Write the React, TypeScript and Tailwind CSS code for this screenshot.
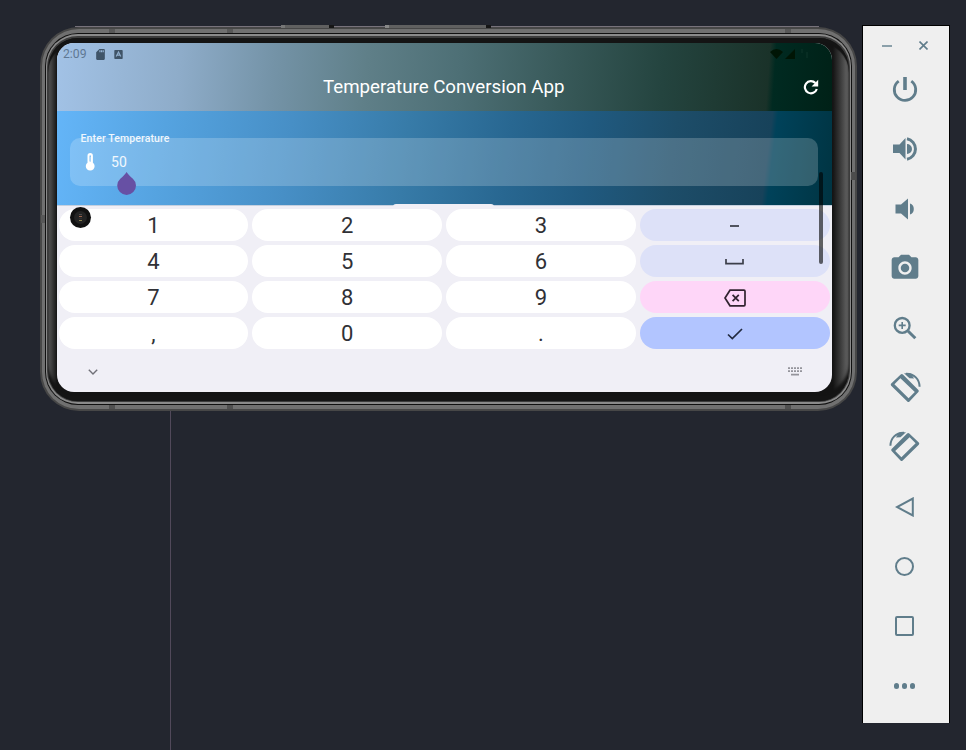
import React from "react";
import { MdPhotoCamera, MdSdCard } from "react-icons/md";

const NUMBER_KEYS = "bg-white text-[#303136]";

function Key({ tone, children }: { tone: string; children: React.ReactNode }) {
  return (
    <div className={`flex items-center justify-center rounded-full pt-[2px] text-[22px] leading-none ${tone}`}>
      {children}
    </div>
  );
}

function DropHandle() {
  return (
    <svg className="absolute left-[60px] top-[128.5px] h-[23px] w-[19px]" viewBox="0 0 19 23">
      <path d="M9.6 0C11 2.6 13.6 4.6 15.9 6.7A9.35 9.35 0 1 1 3.3 6.7C5.6 4.6 8.2 2.6 9.6 0Z" fill="#6750a4" />
    </svg>
  );
}

function CameraHole() {
  return (
    <div className="absolute left-[12.5px] top-[163.7px] flex h-[21px] w-[21px] items-center justify-center rounded-full bg-[#111]">
      <div className="flex h-[13px] w-[13px] flex-col items-center justify-center gap-[1px] rounded-full bg-[#232323]">
        <div className="h-px w-[3px] bg-[#4a4a4a]" />
        <div className="h-px w-[3px] bg-[#98604a]" />
        <div className="h-px w-[3px] bg-[#303030]" />
        <div className="h-px w-[3px] bg-[#8c8450]" />
      </div>
    </div>
  );
}

function StatusBar() {
  return (
    <div className="flex h-[22px] items-center pl-[6px] text-[12.2px] text-[#5f7893]">
      <span className="w-[31px]">2:09</span>
      <MdSdCard className="size-[13px] text-[#3f5468]" />
      <svg className="ml-[7px] size-[9px]" viewBox="0 0 9 9">
        <rect x="0.3" y="0" width="8.4" height="9" rx="0.8" fill="#3f5468" />
        <path d="M2.2 6.5 4.5 2 6.8 6.5M3 5.2h3" fill="none" stroke="#8fadcc" strokeWidth="1.2" />
      </svg>
      <svg className="ml-auto mr-[21px] h-[12px] w-[41px]" viewBox="0 0 41 12">
        <path d="M0 4Q6.500 -2 13 4L6.500 11Z" fill="#001505" />
        <path d="M25 1V11H15Z" fill="#001505" />
        <path d="M32 1v4M37 4v6" stroke="#0a3026" strokeWidth="1.5" />
      </svg>
    </div>
  );
}

function Screen() {
  return (
    <div className="relative flex h-[349px] w-[775px] flex-col overflow-hidden rounded-[17px] bg-[#f0eff6]">
      <div className="h-[68px] bg-[linear-gradient(94deg,#a2c2e6_0%,#8eacc9_16%,#7493a7_28%,#5f7f88_40%,#4d6f75_52%,#385959_65%,#24443f_78%,#1a3229_91.5%,#002a21_92.3%,#002117_100%)]">
        <StatusBar />
        <div className="flex h-[44px] items-center pl-[266px] pr-[13px] text-white">
          <span className="text-[18.7px] leading-none">Temperature Conversion App</span>
          <svg className="ml-auto size-[16px]" viewBox="0 0 16 16" fill="none" stroke="currentColor" strokeWidth="2.2">
            <path d="M12.4 4A6.100 6.100 0 1 0 13.800 10" />
            <path d="M15.200 0.800V7.400H8.600Z" fill="currentColor" stroke="none" />
          </svg>
        </div>
      </div>
      <div className="h-[94px] bg-[linear-gradient(97deg,#64b5f8_0%,#55a3e0_14%,#478fc6_30%,#377ba8_45%,#286791_58%,#205a80_68%,#1d4d69_79%,#17425a_91%,#00425a_91.7%,#003442_100%)] pl-[13px] pr-[14px] pt-[27px]">
        <div className="relative flex h-[48px] items-center rounded-[10px] bg-white/20 pl-[14px] text-white">
          <span className="absolute left-[10.5px] top-[-5px] text-[10.5px] font-medium leading-[12px] tracking-[0.12px] text-white/90">
            Enter Temperature
          </span>
          <svg className="h-[20px] w-[12px]" viewBox="0 0 12 20">
            <path
              fillRule="evenodd"
              d="M6.2 1a2.7 2.7 0 0 0-2.7 2.7v7a4.4 4.4 0 1 0 5.400 0v-7A2.7 2.7 0 0 0 6.2 1ZM5.500 9.500V4a.7.7 0 0 1 1.400 0v5.500Z"
              fill="white"
            />
            <path d="M6.2 6h1M6.2 8h1" stroke="white" strokeWidth="0.8" />
          </svg>
          <span className="ml-[15px] text-[14px] leading-none tracking-[0.25px] text-white/90">50</span>
        </div>
      </div>
      <div className="h-px w-full shrink-0 bg-[#c5d0df]" />
      <div className="mt-[3px] grid grid-cols-4 grid-rows-[repeat(4,32px)] gap-[4px] pl-[1.5px] pr-[2.5px]">
        <Key tone={NUMBER_KEYS}>1</Key>
        <Key tone={NUMBER_KEYS}>2</Key>
        <Key tone={NUMBER_KEYS}>3</Key>
        <Key tone="bg-[#dde1f8] text-[#50535f]">
          <div className="h-[2px] w-[9px] bg-current" />
        </Key>
        <Key tone={NUMBER_KEYS}>4</Key>
        <Key tone={NUMBER_KEYS}>5</Key>
        <Key tone={NUMBER_KEYS}>6</Key>
        <Key tone="bg-[#dde1f8] text-[#3c3f4a]">
          <svg className="h-[6px] w-[19px]" viewBox="0 0 19 6" fill="none" stroke="currentColor" strokeWidth="1.7">
            <path d="M1 0v4.600h17V0" />
          </svg>
        </Key>
        <Key tone={NUMBER_KEYS}>7</Key>
        <Key tone={NUMBER_KEYS}>8</Key>
        <Key tone={NUMBER_KEYS}>9</Key>
        <Key tone="bg-[#fed6f8] text-[#31232f]">
          <svg className="h-[18px] w-[22px]" viewBox="0 0 22 18" fill="none" stroke="currentColor" strokeWidth="1.7">
            <path d="M6 1.2h14q1 0 1 1v13.6q0 1-1 1H6L1 9ZM8.600 5.800l6.200 6.400M14.800 5.800l-6.200 6.400" />
          </svg>
        </Key>
        <Key tone={NUMBER_KEYS}>,</Key>
        <Key tone={NUMBER_KEYS}>0</Key>
        <Key tone={NUMBER_KEYS}>.</Key>
        <Key tone="bg-[#b2c5ff] text-[#222a40]">
          <svg className="h-[12px] w-[16px]" viewBox="0 0 16 12" fill="none" stroke="currentColor" strokeWidth="1.7">
            <path d="M1 6.5 5.3 10.6 15 1" />
          </svg>
        </Key>
      </div>
      <div className="flex flex-1 items-center justify-between pl-[31px] pr-[30px] pt-[2px] text-[#707078]">
        <svg className="h-[6px] w-[10px]" viewBox="0 0 10 6" fill="none" stroke="currentColor" strokeWidth="1.4">
          <path d="M.8.8 5 5 9.2.8" />
        </svg>
        <svg className="h-[9px] w-[14px]" viewBox="0 0 14 9" stroke="#94949b">
          <path d="M0 1.200h14M0 4.200h14" strokeWidth="1.8" strokeDasharray="2 1" />
          <path d="M3 7.700h8" strokeWidth="1.8" />
        </svg>
      </div>
      <div className="absolute left-[336px] top-[161px] h-[4px] w-[101px] rounded-t-[3px] bg-[#f0eff6]" />
      <DropHandle />
      <CameraHole />
      <div className="absolute left-[762px] top-[129px] h-[92px] w-[4px] rounded-full bg-black/60" />
    </div>
  );
}

function BandSeams() {
  return (
    <>
      <div className="absolute left-[69px] top-[2px] h-[4px] w-[6px] bg-[#585858]" />
      <div className="absolute left-[187px] top-[2px] h-[4px] w-[6px] bg-[#585858]" />
      <div className="absolute left-[745px] top-[2px] h-[4px] w-[6px] bg-[#585858]" />
      <div className="absolute bottom-[2px] left-[69px] h-[4px] w-[6px] bg-[#505050]" />
      <div className="absolute bottom-[2px] left-[187px] h-[4px] w-[6px] bg-[#505050]" />
      <div className="absolute bottom-[2px] left-[745px] h-[4px] w-[6px] bg-[#505050]" />
      <div className="absolute left-px top-[188px] h-[8px] w-[4px] bg-[#585858]" />
      <div className="absolute right-px top-[145px] h-[8px] w-[5px] bg-[#4c4c4c]" />
      <div className="absolute left-[35px] top-[-1px] h-px w-[744px] bg-[#77727b]" />
      <div className="absolute left-[241px] top-[-2px] h-[3px] w-[53px] border-l-[4px] border-r-[5px] border-l-[#777] border-r-[#161616] bg-[#606060]" />
      <div className="absolute left-[345px] top-[-2px] h-[3px] w-[106px] border-l-[4px] border-r-[5px] border-l-[#888] border-r-[#161616] bg-[#606060]" />
    </>
  );
}

function Phone() {
  return (
    <div className="relative ml-[40px] mt-[27px] h-[384px] w-[817px] rounded-[39px] bg-[#474747] p-[2px]">
      <div className="h-full rounded-[37px] bg-[#707070] px-[3px] py-[4px]">
        <div className="h-full rounded-[33px] bg-[#101010] p-px">
          <div className="h-full rounded-[32px] bg-[#8a8a8a] px-px pb-[2px] pt-[2px]">
            <div className="h-full rounded-[31px] bg-[#3c3c3c] px-px pb-px pt-[2px]">
              <div className="h-full rounded-[30px] bg-[linear-gradient(90deg,#606060_0,#3c3c3c_4px,#141414_9px,#141414_785px,#383838_792px,#6a6a6a_801px)] pl-[9px] pt-[5px] shadow-[inset_0_5px_1px_#141414,inset_0_-8px_3px_#141414]">
                <Screen />
              </div>
            </div>
          </div>
        </div>
      </div>
      <BandSeams />
    </div>
  );
}

function Tool({ children }: { children: React.ReactNode }) {
  return <div className="flex h-[59.68px] items-center justify-center">{children}</div>;
}

function Speaker({ loud }: { loud: boolean }) {
  return (
    <svg className="size-[30px]" viewBox="0 0 30 30" fill="currentColor">
      {loud ? (
        <>
          <path d="M3 10.5h6.500l6-6.500v21.500l-6-6.500H3ZM17 10a5 5 0 0 1 0 10Z" />
          <path d="M17 4.700a10.500 10.500 0 0 1 0 20.600" fill="none" stroke="currentColor" strokeWidth="3" />
        </>
      ) : (
        <path d="M5.500 10.500h5.500l7-6v21l-7-6H5.500ZM20 9.500q3.800 1.300 3.800 5.500T20 20.500Z" />
      )}
    </svg>
  );
}

function Rotate({ flipped }: { flipped: boolean }) {
  return (
    <svg className={flipped ? "size-[32px] -scale-x-100" : "size-[32px]"} viewBox="0 0 32 32">
      <path
        fill="currentColor"
        fillRule="evenodd"
        d="M11.7 2.4q1.1-1 2.2 0L29.4 18.1q.9 1 0 2L20.5 29.6q-1.1 1-2.2 0L2.2 13.8q-1-1.1 0-2.2ZM11.4 6.200 5.400 12.300 19.600 26.200 25.800 20Z"
      />
      <path d="M17 1.700C25.300 1.500 30.400 7.300 30.600 14.700" fill="none" stroke="currentColor" strokeWidth="2" />
      <path d="M15 1.300 22 1.500 25 6.500 20.500 6.200Z" fill="currentColor" />
    </svg>
  );
}

function Toolbar() {
  return (
    <div className="ml-[5px] mt-[25px] h-[698px] w-[88px] shrink-0 border-x border-t border-black bg-[#efefef] text-[#607d8b]">
      <div className="flex h-[33.4px] items-center pl-[19px] pt-[6.4px]">
        <div className="h-[2px] w-[10px] bg-[#8ba0aa]" />
        <svg className="ml-[27px] size-[9px]" viewBox="0 0 9 9" stroke="currentColor" strokeWidth="1.6">
          <path d="m.5.5 8 8M8.5.5l-8 8" />
        </svg>
      </div>
      <div className="pr-[3px]">
        <Tool>
          <svg className="size-[26px]" viewBox="0 0 26 26" fill="none" stroke="currentColor">
            <path d="M6.7 5.100a10.700 10.700 0 1 0 12.600 0" strokeWidth="2.8" />
            <path d="M13 1v13" strokeWidth="3.6" />
          </svg>
        </Tool>
        <Tool><Speaker loud /></Tool>
        <Tool><Speaker loud={false} /></Tool>
        <Tool><MdPhotoCamera className="size-[32px]" /></Tool>
        <Tool>
          <svg className="size-[24px]" viewBox="0 0 24 24" fill="none" stroke="currentColor">
            <circle cx="9.200" cy="9.400" r="7.400" strokeWidth="2.300" />
            <path d="M5.700 9.400h7M9.200 5.900v7" strokeWidth="1.6" />
            <path d="m15 15 7.300 7.300" strokeWidth="3" />
          </svg>
        </Tool>
        <Tool><Rotate flipped={false} /></Tool>
        <Tool><Rotate flipped /></Tool>
        <Tool>
          <svg className="size-[20px]" viewBox="0 0 20 20" fill="none" stroke="currentColor" strokeWidth="2">
            <path d="M17.800 1.500v17L2 10Z" />
          </svg>
        </Tool>
        <Tool><div className="size-[19px] rounded-full border-2 border-current" /></Tool>
        <Tool><div className="h-[20px] w-[19px] rounded-[2px] border-2 border-current" /></Tool>
        <Tool>
          <div className="flex gap-[2.5px]">
            <div className="size-[5.5px] rounded-full bg-current" />
            <div className="size-[5.5px] rounded-full bg-current" />
            <div className="size-[5.5px] rounded-full bg-current" />
          </div>
        </Tool>
      </div>
    </div>
  );
}

export default function App() {
  return (
    <div className="relative flex h-[750px] w-[966px] items-start overflow-hidden bg-[#23262f] font-[Roboto,sans-serif]">
      <div className="absolute left-[170px] top-[400px] h-[350px] w-px bg-[#51495a]" />
      <Phone />
      <Toolbar />
    </div>
  );
}
